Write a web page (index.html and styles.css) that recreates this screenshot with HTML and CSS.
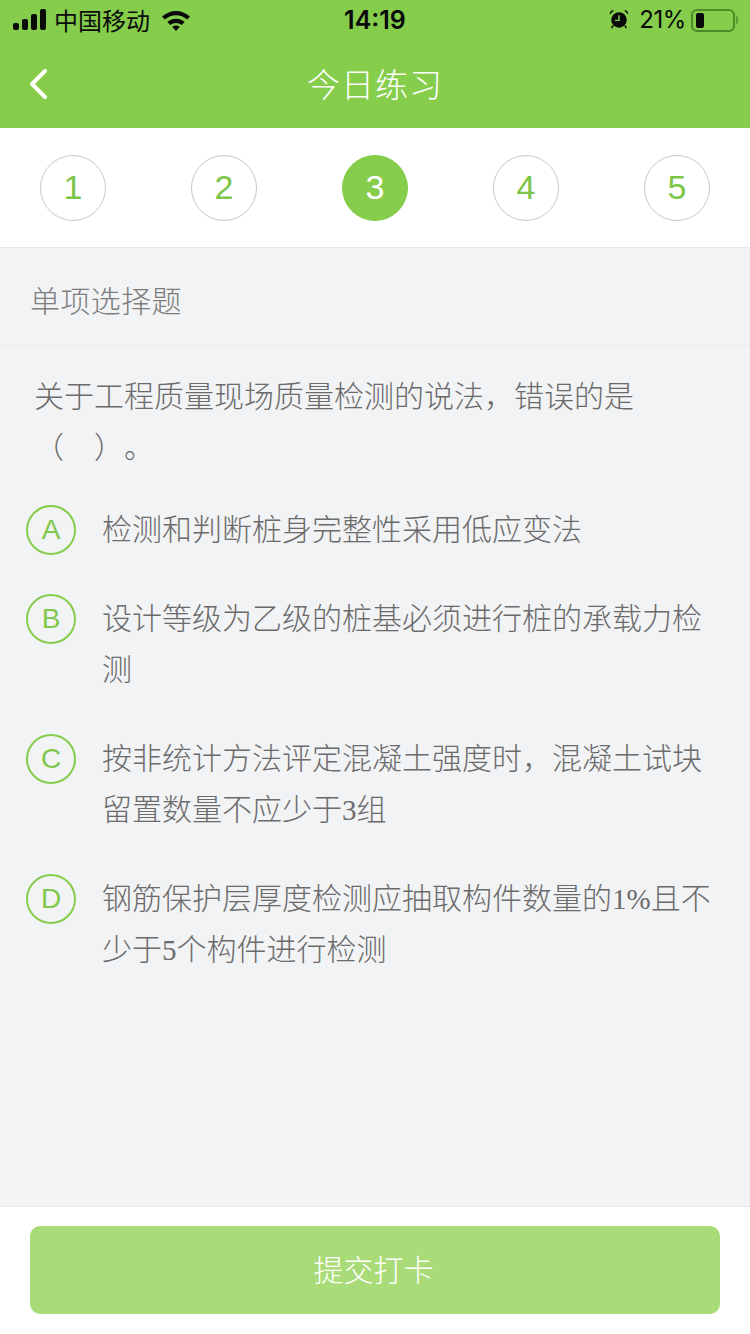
FILE: index.html
```html
<!DOCTYPE html>
<html lang="zh-CN">
<head>
<meta charset="UTF-8" />
<meta name="viewport" content="width=device-width, initial-scale=1" />
<title>今日练习</title>
<link rel="stylesheet" href="styles.css">
</head>
<body>

<div class="page">
  <header class="header">
    <div class="statusbar">
      <div class="status-left">
        <svg class="signal" width="36" height="22" viewBox="0 0 36 22">
          <rect x="1" y="14" width="6" height="7" rx="2" />
          <rect x="10" y="10" width="6" height="11" rx="2" />
          <rect x="19" y="5" width="6" height="16" rx="2" />
          <rect x="28" y="0" width="6" height="21" rx="2" />
        </svg>
        <span class="carrier">中国移动</span>
        <svg class="wifi" width="30" height="22" viewBox="0 0 30 22">
          <path d="M1 7.5 C9 0 21 0 29 7.5 L26.2 10.6 C19.5 4.8 10.5 4.8 3.8 10.6 Z" />
          <path d="M6.4 13 C11.5 8.6 18.5 8.6 23.6 13 L20.8 16 C17.2 13.2 12.8 13.2 9.2 16 Z" />
          <path d="M11.2 17.8 C13.5 16.2 16.5 16.2 18.8 17.8 L15 22 Z" />
        </svg>
      </div>
      <div class="status-time">14:19</div>
      <div class="status-right">
        <svg class="alarm" width="20" height="20" viewBox="0 0 22 22">
          <circle cx="11" cy="12" r="8.5" />
          <path d="M1 6 L5.5 1.5 C3 0.8 0.4 3 1 6 Z" />
          <path d="M21 6 L16.5 1.5 C19 0.8 21.6 3 21 6 Z" />
          <path d="M11 7 V12.5 H6.5" class="alarm-hand" />
          <path d="M4.5 18 L3 21 M17.5 18 L19 21" class="alarm-foot" />
        </svg>
        <span class="percent">21%</span>
        <div class="battery"><div class="battery-level"></div></div>
        <div class="battery-cap"></div>
      </div>
    </div>
    <div class="navbar">
      <svg class="back" width="20" height="32" viewBox="0 0 20 32">
        <path d="M17 3 L4 16 L17 29" />
      </svg>
      <h1 class="title">今日练习</h1>
    </div>
  </header>

  <nav class="steps">
    <div class="step">1</div>
    <div class="step">2</div>
    <div class="step active">3</div>
    <div class="step">4</div>
    <div class="step">5</div>
  </nav>

  <div class="qtype">单项选择题</div>

  <main class="question">
    <p class="stem">关于工程质量现场质量检测的说法，错误的是<br><span class="blank">（<span class="gap"></span>）<span class="gap-end"></span>。</span></p>

    <div class="option">
      <div class="letter">A</div>
      <div class="option-text">检测和判断桩身完整性采用低应变法</div>
    </div>
    <div class="option">
      <div class="letter">B</div>
      <div class="option-text">设计等级为乙级的桩基必须进行桩的承载力检测</div>
    </div>
    <div class="option">
      <div class="letter">C</div>
      <div class="option-text">按非统计方法评定混凝土强度时，混凝土试块留置数量不应少于<span class="num">3</span>组</div>
    </div>
    <div class="option">
      <div class="letter">D</div>
      <div class="option-text">钢筋保护层厚度检测应抽取构件数量的<span class="num">1%</span>且不少于<span class="num">5</span>个构件进行检测</div>
    </div>
  </main>

  <footer class="footer">
    <button class="submit" type="button">提交打卡</button>
  </footer>
</div>

</body>
</html>
```

FILE: styles.css
```css
* {
  box-sizing: border-box;
}

body {
  margin: 0;
  font-family: "Noto Sans CJK SC", "Noto Sans", sans-serif;
  background: #f2f3f5;
}

.page {
  width: 750px;
  height: 1334px;
  display: flex;
  flex-direction: column;
  overflow: hidden;
}

/* Cabecalho verde */
.header {
  height: 128px;
  background: #85cd4b;
  flex-shrink: 0;
}

.statusbar {
  height: 40px;
  padding: 0 12px;
  display: flex;
  align-items: center;
  justify-content: space-between;
  position: relative;
  color: #0a0a0a;
}

.status-left,
.status-right {
  display: flex;
  align-items: center;
}

.signal,
.wifi,
.alarm {
  fill: #0a0a0a;
}

.carrier {
  margin-left: 6px;
  font-size: 24px;
  line-height: 40px;
}

.wifi {
  margin-left: 11px;
}

.status-time {
  position: absolute;
  left: 0;
  right: 0;
  text-align: center;
  font-family: Inter, "Liberation Sans", sans-serif;
  font-size: 25px;
  font-weight: 600;
  line-height: 40px;
}

.alarm {
  margin-right: 10px;
  margin-bottom: 2px;
}

.alarm-hand {
  fill: none;
  stroke: #85cd4b;
  stroke-width: 1.6;
}

.alarm-foot {
  fill: none;
  stroke: #0a0a0a;
  stroke-width: 1.6;
}

.percent {
  font-family: Inter, "Liberation Sans", sans-serif;
  font-size: 24px;
  line-height: 40px;
  margin-right: 5px;
  letter-spacing: -0.4px;
}

.battery {
  width: 44px;
  height: 23px;
  border: 2px solid #4f8a2a;
  border-radius: 6px;
  padding: 2px 3px;
}

.battery-level {
  width: 8px;
  height: 100%;
  background: #0a0a0a;
  border-radius: 2px;
}

.battery-cap {
  width: 2px;
  height: 8px;
  margin-left: 1px;
  background: #5c9a32;
  border-radius: 0 2px 2px 0;
}

.navbar {
  height: 88px;
  position: relative;
  display: flex;
  align-items: center;
  justify-content: center;
}

.back {
  position: absolute;
  left: 28px;
  top: 28px;
  fill: none;
  stroke: #fff;
  stroke-width: 4;
  stroke-linecap: round;
  stroke-linejoin: round;
}

.title {
  margin: 0 0 2px;
  font-size: 33px;
  font-weight: 300;
  color: #fff;
  letter-spacing: 1px;
  line-height: 86px;
}

/* Passos */
.steps {
  height: 120px;
  background: #fff;
  border-bottom: 1px solid #e8e9eb;
  padding: 27px 40px 0;
  display: flex;
  justify-content: space-between;
  align-items: flex-start;
  flex-shrink: 0;
}

.step {
  width: 66px;
  height: 66px;
  border-radius: 50%;
  border: 1px solid #c8c8c8;
  padding-bottom: 2px;
  display: flex;
  align-items: center;
  justify-content: center;
  color: #7cc548;
  font-family: "Liberation Sans", sans-serif;
  font-size: 34px;
}

.step.active {
  background: #85cd4b;
  border-color: #85cd4b;
  color: #fff;
}

.qtype {
  height: 98px;
  padding-left: 30px;
  border-bottom: 1px solid #e9eaec;
  color: #7d7d7d;
  font-size: 30px;
  letter-spacing: 0.4px;
  line-height: 102px;
  font-weight: 300;
  flex-shrink: 0;
}

.question {
  flex: 1;
  padding: 23px 30px 0 26px;
}

.stem {
  margin: 0 0 31px 8px;
  color: #6b6b6b;
  font-size: 30px;
  line-height: 51px;
  font-weight: 300;
}

.gap {
  display: inline-block;
  width: 30px;
}

.gap-end {
  display: inline-block;
  width: 0;
}

.option {
  display: flex;
  align-items: flex-start;
  margin-bottom: 38px;
}

.letter {
  width: 50px;
  height: 50px;
  margin: 3px 0 -3px;
  border: 2px solid #85cd4b;
  border-radius: 50%;
  display: flex;
  align-items: center;
  justify-content: center;
  color: #80c84c;
  font-family: "Liberation Sans", sans-serif;
  font-size: 28px;
  flex-shrink: 0;
}

.option-text {
  margin-left: 26px;
  color: #6b6b6b;
  font-size: 30px;
  line-height: 51px;
  font-weight: 300;
}

.num {
  font-family: "Liberation Serif", serif;
  font-size: 29px;
  line-height: 1;
}

.footer {
  height: 128px;
  background: #fff;
  border-top: 1px solid #e8e9eb;
  padding: 19px 30px 0;
  flex-shrink: 0;
}

.submit {
  display: block;
  width: 100%;
  height: 88px;
  border: none;
  border-radius: 10px;
  background: #a9dc78;
  color: #fff;
  font-family: inherit;
  font-size: 30px;
  font-weight: 300;
  padding: 0 3px 5px 0;
}
```
